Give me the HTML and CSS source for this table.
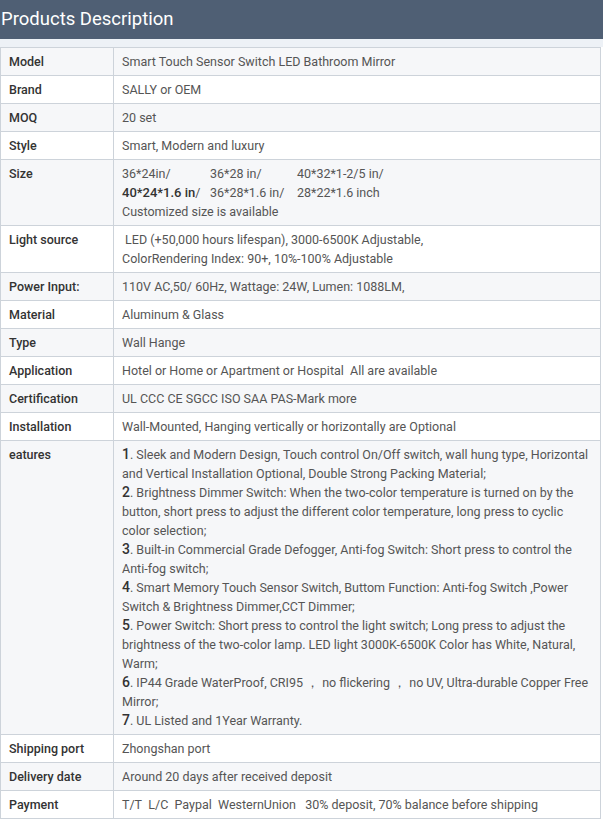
FILE: index.html
```html
<!DOCTYPE html>
<html>
<head>
<meta charset="utf-8">
<link rel="stylesheet" href="styles.css">
</head>
<body>
<div class="title">Products Description</div>
<div class="strip"></div>
<table class="spec">
<colgroup><col class="c1"><col></colgroup>
<tr><th>Model</th><td>Smart Touch Sensor Switch LED Bathroom Mirror</td></tr>
<tr><th>Brand</th><td>SALLY or OEM</td></tr>
<tr><th>MOQ</th><td>20 set</td></tr>
<tr><th>Style</th><td>Smart, Modern and luxury</td></tr>
<tr><th>Size</th><td><div class="sizes"><span>36*24in/</span><span class="s2">36*28 in/</span><span>40*32*1-2/5 in/</span><span><b>40*24*1.6 in</b>/</span><span>36*28*1.6 in/</span><span>28*22*1.6 inch</span></div>Customized size is available</td></tr>
<tr><th>Light source</th><td>&nbsp;LED (+50,000 hours lifespan), 3000-6500K Adjustable,<br>ColorRendering Index: 90+, 10%-100% Adjustable</td></tr>
<tr><th>Power Input:</th><td>110V AC,50/ 60Hz, Wattage: 24W, Lumen: 1088LM,</td></tr>
<tr><th>Material</th><td>Aluminum &amp; Glass</td></tr>
<tr><th>Type</th><td>Wall Hange</td></tr>
<tr><th>Application</th><td>Hotel or Home or Apartment or Hospital&nbsp; All are available</td></tr>
<tr><th>Certification</th><td>UL CCC CE SGCC ISO SAA PAS-Mark more</td></tr>
<tr><th>Installation</th><td>Wall-Mounted, Hanging vertically or horizontally are Optional</td></tr>
<tr><th>eatures</th><td class="feat"><span class="n">1</span>. Sleek and Modern Design, Touch control On/Off switch, wall hung type, Horizontal and Vertical Installation Optional, Double Strong Packing Material;<br><span class="n">2</span>. Brightness Dimmer Switch: When the two-color temperature is turned on by the button, short press to adjust the different color temperature, long press to cyclic color selection;<br><span class="n">3</span>. Built-in Commercial Grade Defogger, Anti-fog Switch: Short press to control the Anti-fog switch;<br><span class="n">4</span>. Smart Memory Touch Sensor Switch, Buttom Function: Anti-fog Switch ,Power Switch &amp; Brightness Dimmer,CCT Dimmer;<br><span class="n">5</span>. Power Switch: Short press to control the light switch; Long press to adjust the brightness of the two-color lamp. LED light 3000K-6500K Color has White, Natural, Warm;<br><span class="n">6</span>. IP44 Grade WaterProof, CRI95 ， no flickering ， no UV, Ultra-durable Copper Free Mirror;<br><span class="n">7</span>. UL Listed and 1Year Warranty.</td></tr>
<tr><th>Shipping port</th><td>Zhongshan port</td></tr>
<tr><th>Delivery date</th><td>Around 20 days after received deposit</td></tr>
<tr><th>Payment</th><td>T/T&nbsp; L/C&nbsp; Paypal&nbsp; WesternUnion&nbsp;&nbsp; 30% deposit, 70% balance before shipping</td></tr>
</table>
</body>
</html>
```
FILE: styles.css
```css
html, body {
  margin: 0;
  padding: 0;
  background: #ffffff;
}
body {
  font-family: Roboto, "Liberation Sans", sans-serif;
}
.title {
  height: 39px;
  line-height: 39px;
  background: #4f5f74;
  color: #ffffff;
  font-size: 18.5px;
  padding-left: 1px;
}
.strip {
  height: 8px;
  background: #edf1f6;
}
.spec {
  width: 601px;
  border-collapse: collapse;
  border: 1px solid #bfc7d1;
  font-size: 12.5px;
  line-height: 19px;
}
.c1 { width: 113px; }
.spec th, .spec td {
  border: 1px solid #cdd3da;
  padding: 4px 8px;
  text-align: left;
  vertical-align: top;
}
.spec th {
  font-weight: 500;
  color: #333333;
}
.spec td {
  color: #555555;
}
.spec tr:nth-child(odd) th, .spec tr:nth-child(odd) td {
  background: #f6f7f9;
}
.sizes {
  display: grid;
  grid-template-columns: 88px 87px auto;
}
.sizes b {
  font-weight: 500;
  color: #333333;
  font-size: 13px;
}
.feat .n {
  font-size: 14px;
  line-height: 16px;
  font-weight: 500;
  color: #333333;
}
```
